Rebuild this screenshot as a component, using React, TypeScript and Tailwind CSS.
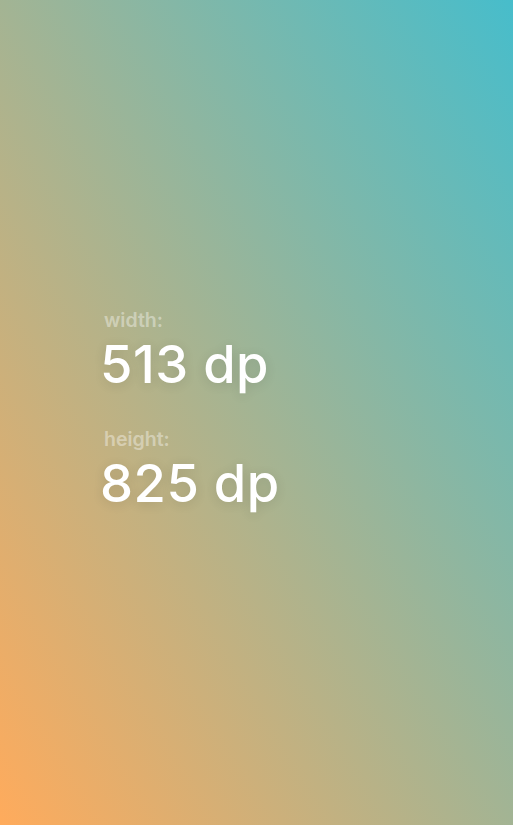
import React from "react";

const Metric = ({ label, value }: { label: string; value: string }) => {
    return (
        <div className="flex flex-col">
            <span className="pl-[4px] text-[19.5px] font-[600] leading-[24px] text-white/40">{label}</span>
            <span className="mt-[4px] text-[52.5px] font-[500] leading-[56px] tracking-[0.5px] text-white [text-shadow:0_2px_12px_rgba(0,0,0,0.12)]">{value}</span>
        </div>
    );
};

const App = () => {
    return (
        <div className="w-full h-[825px] bg-[linear-gradient(to_top_right,#ffab5c,#47bdcb)] font-[Inter,sans-serif]">
            <div className="flex flex-col gap-[35px] pl-[100px] pt-[308px]">
                <Metric label="width:" value="513 dp" />
                <Metric label="height:" value="825 dp" />
            </div>
        </div>
    );
};

export default App;
